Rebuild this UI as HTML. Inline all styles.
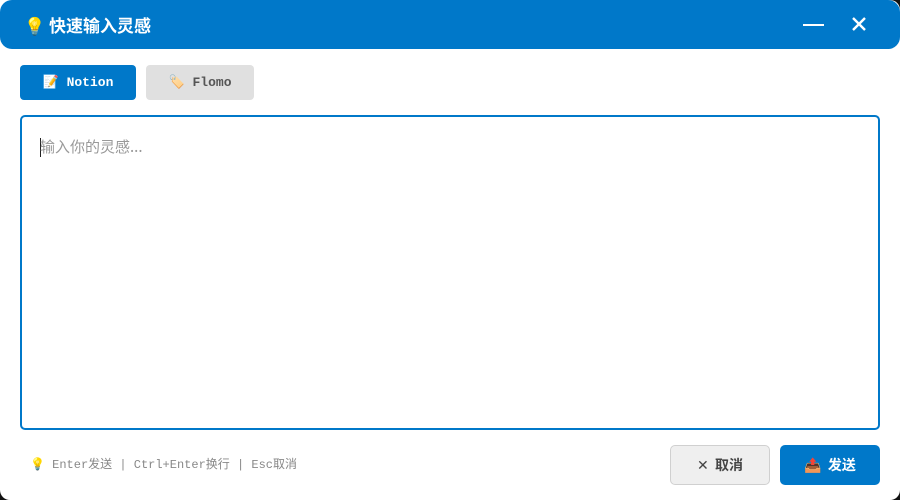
<!DOCTYPE html>
<html><head><meta charset="utf-8"><style>
*{margin:0;padding:0;box-sizing:border-box}
html,body{width:900px;height:500px;overflow:hidden;background:#fff}
body{position:relative;font-family:"Liberation Sans","Noto Sans CJK SC",sans-serif}
.cb{position:absolute;width:10px;height:10px;background:#111}
.win{position:absolute;left:0;top:0;width:900px;height:500px;background:#fff;border-radius:0 10px 10px 10px}
.hdr{position:absolute;left:0;top:0;width:900px;height:49px;background:#0078c9;border-radius:12px 12px 12px 12px}
.title{position:absolute;left:24px;top:13px;color:#fff;font-size:17px;font-weight:bold;font-family:"Noto Sans CJK SC",sans-serif;line-height:24px}
.min{position:absolute;left:803px;top:24px;width:21px;height:2px;background:#fff}
.tab{position:absolute;top:65px;height:35px;border-radius:4px;font-family:"Liberation Mono","Noto Sans CJK SC",monospace;font-weight:bold;font-size:13px;line-height:35px;text-align:center}
.ta{position:absolute;left:20px;top:115px;width:860px;height:315px;border:2px solid #0078c9;border-radius:5px}
.ph{position:absolute;left:18px;top:20px;font-size:15px;color:#999;font-family:"Noto Sans CJK SC",sans-serif;line-height:20px}
.caret{position:absolute;left:18px;top:21px;width:1px;height:19px;background:#222}
.hint{position:absolute;left:30px;top:457px;font-size:12px;color:#888;font-family:"Liberation Mono","Noto Sans CJK SC",monospace;line-height:16px}
.btn{position:absolute;top:445px;height:40px;border-radius:5px;font-size:14px;font-weight:bold;font-family:"Noto Sans CJK SC",sans-serif;line-height:40px;text-align:center}
</style></head><body>
<div class="cb" style="left:0;bottom:0"></div><div class="cb" style="right:0;bottom:0"></div><div class="cb" style="right:0;top:0"></div>
<div class="win"></div>
<div class="hdr"></div>
<div class="title">💡 快速输入灵感</div>
<div class="min"></div>
<svg style="position:absolute;left:851px;top:16px" width="16" height="16"><path d="M2 2L14 14M14 2L2 14" stroke="#fff" stroke-width="2.4"/></svg>
<div class="tab" style="left:20px;width:116px;background:#0078c9;color:#fff">📝 Notion</div>
<div class="tab" style="left:146px;width:108px;background:#e0e0e0;color:#555">🏷️ Flomo</div>
<div class="ta"><div class="caret"></div><div class="ph">输入你的灵感...</div></div>
<div class="hint">💡 Enter发送 | Ctrl+Enter换行 | Esc取消</div>
<div class="btn" style="left:670px;width:100px;background:#efefef;border:1px solid #d0d0d0;color:#444;line-height:38px"><span style="font-weight:normal">✕</span>&nbsp;&nbsp;取消</div>
<div class="btn" style="left:780px;width:100px;background:#0078c9;color:#fff">📤&nbsp;&nbsp;发送</div>
</body></html>
